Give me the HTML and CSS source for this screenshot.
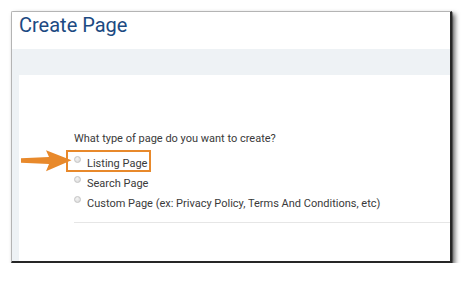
FILE: index.html
```html
<!DOCTYPE html>
<html>
<head>
<meta charset="utf-8">
<link rel="stylesheet" href="styles.css">
</head>
<body>
<div class="frame">
  <div class="header"><h1 class="title">Create Page</h1></div>
  <div class="main">
    <div class="card">
      <p class="question">What type of page do you want to create?</p>
      <div class="options">
        <div class="option highlighted">
          <span class="radio"></span><span class="label">Listing Page</span>
          <span class="callout"></span>
          <svg class="arrow" width="60" height="32" viewBox="0 0 60 32"><path d="M3 13.2 L31 12 L28 5.2 L53.5 15.2 L28 26.2 L31 19 L3 17.8 Z" fill="#e8892b"/></svg>
        </div>
        <div class="option"><span class="radio"></span><span class="label">Search Page</span></div>
        <div class="option"><span class="radio"></span><span class="label">Custom Page (ex: Privacy Policy, Terms And Conditions, etc)</span></div>
      </div>
      <div class="divider"></div>
    </div>
  </div>
</div>
</body>
</html>
```

FILE: styles.css
```css
html, body {
  margin: 0;
  padding: 0;
  background: #ffffff;
}
body {
  font-family: Roboto, "Liberation Sans", sans-serif;
  color: #3a3a3a;
}
.frame {
  box-sizing: border-box;
  margin: 11px 0 0 11px;
  width: 441px;
  height: 252px;
  border-top: 1px solid #b4b4b4;
  border-left: 1px solid #b4b4b4;
  border-right: 2px solid #262626;
  border-bottom: 2px solid #262626;
  border-radius: 2px 0 0 0;
  box-shadow: 3px 3px 5px rgba(0, 0, 0, 0.6), 1px 1px 1px rgba(0,0,0,0.4);
  display: flex;
  flex-direction: column;
  overflow: hidden;
  background: #ffffff;
}
.header {
  height: 37px;
  padding: 1px 0 0 7px;
  box-sizing: border-box;
  background: #ffffff;
}
.title {
  margin: 0;
  font-size: 20px;
  line-height: 24px;
  font-weight: 400;
  color: #1c4a82;
}
.main {
  flex: 1;
  display: flex;
  background: #eef2f5;
  padding: 26px 0 0 7px;
}
.card {
  flex: 1;
  background: #ffffff;
  padding: 56px 0 0 55px;
}
.question {
  margin: 0;
  font-size: 11px;
  line-height: 16px;
}
.options {
  margin-top: 7px;
}
.option {
  position: relative;
  display: flex;
  align-items: flex-start;
  height: 20px;
  font-size: 11px;
  line-height: 20px;
}
.radio {
  box-sizing: border-box;
  width: 7px;
  height: 7px;
  margin-top: 2px;
  border-radius: 50%;
  border: 1px solid #c4c4c4;
  background: radial-gradient(circle at 40% 35%, #f4f4f4, #d6d6d6);
}
.label {
  margin-left: 6px;
}
.callout {
  position: absolute;
  left: -8px;
  top: -4px;
  width: 85px;
  height: 22px;
  box-sizing: border-box;
  border: 2px solid #e8892b;
}
.arrow {
  position: absolute;
  left: -56px;
  top: -9px;
}
.divider {
  margin-top: 8px;
  border-top: 1px solid #e6e6e6;
}
```
